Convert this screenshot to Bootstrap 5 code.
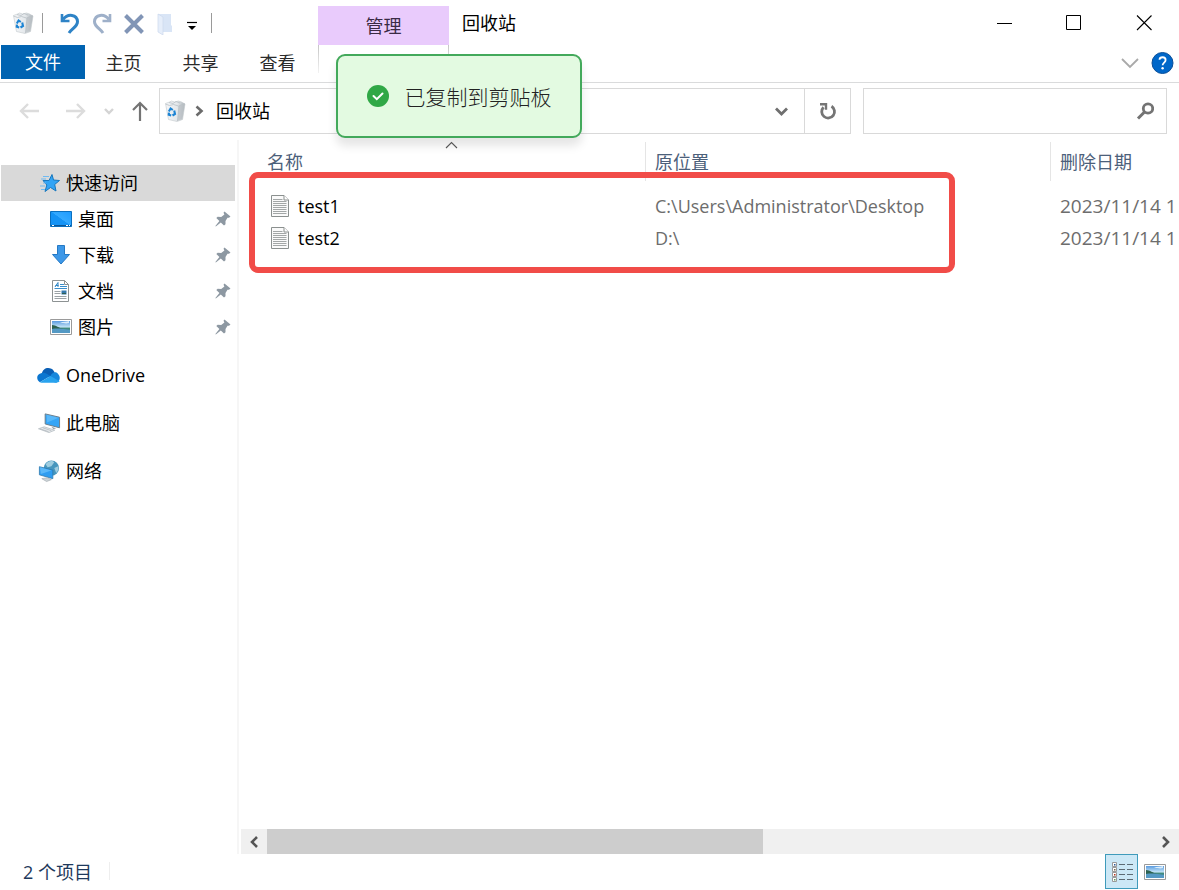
<!DOCTYPE html>
<html lang="zh-CN">
<head>
<meta charset="utf-8">
<meta name="viewport" content="width=device-width, initial-scale=1">
<title>回收站</title>
<link href="https://cdn.jsdelivr.net/npm/bootstrap@5.3.0/dist/css/bootstrap.min.css" rel="stylesheet">
<style>
  body { font-family: "Open Sans", "Noto Sans CJK SC", sans-serif; font-size: 18px; line-height: 24px; color: #000; background: #fff; font-weight: 400; }
  svg { display: block; flex: none; }
  button { background: none; border: 0; padding: 0; color: inherit; }
  a { color: inherit; text-decoration: none; }

  /* title bar and ribbon */
  .title-row { height: 45px; }
  .quick-bar { width: 318px; padding-left: 12px; }
  .v-sep { width: 1px; height: 20px; background: #9a9a9a; }
  .ctx-title { width: 131px; height: 39px; background: #e9cbfc; color: #3a2a44; }
  .win-title { padding-left: 13px; }
  .win-btn { width: 70px; height: 45px; }
  .ribbon { height: 38px; border-bottom: 1px solid #dadbdc; color: #2b2b2b; }
  .tab-btn { width: 77px; height: 36px; }
  .tab-file { width: 84px; height: 34px; margin-left: 1px; background: #0063b1; color: #fff; }
  .ctx-tab { width: 131px; height: 28px; margin-left: 2px; border: 1px solid; border-width: 0 1px; border-image: linear-gradient(#c4c4c4, #f4f4f4) 1; }

  /* address row */
  .nav-row { height: 57px; padding: 5px 12px 6px 0; }
  .nav-arrows { width: 159px; padding-left: 19px; }
  .addr-box, .find-box { height: 46px; border: 1px solid #d9d9d9; }
  .find-box { width: 304px; margin-left: 12px; }
  .find-box input { border: 0; outline: 0; min-width: 0; background: none; }
  .reload-btn { width: 46px; border-left: 1px solid #d9d9d9; }

  /* copy notice */
  .notice { position: absolute; left: 336px; top: 54px; width: 246px; height: 84px; z-index: 5; background: #e3fae1; border: 2px solid #43a95b; border-radius: 9px; box-shadow: 0 8px 10px rgba(0,0,0,.1); color: #222; font-size: 21px; font-weight: 300; font-family: "Noto Sans CJK SC Light", "Noto Sans CJK SC DemiLight", "Noto Sans CJK SC", sans-serif; }

  /* navigation pane */
  .side-pane { width: 239px; flex: none; border-right: 2px solid #f6f6f6; padding: 25px 2px 0 1px; }
  .side-item { height: 36px; gap: 5px; padding-left: 36px; padding-right: 4px; }
  .side-item.sub { padding-left: 48px; }
  .side-item.apart { margin-top: 12px; }
  .side-item.chosen { background: #d9d9d9; }

  /* file list */
  .files { table-layout: fixed; width: 100%; }
  .files th, .files td { padding: 0; white-space: nowrap; overflow: hidden; font-weight: 400; }
  .files th { height: 42px; color: #4c607a; }
  .files td { height: 32px; color: #6d6d6d; }
  .files thead th > div { height: 39px; padding-left: 9px; margin-top: 2px; margin-bottom: 1px; border-left: 1px solid #e5e5e5; }
  .files thead th:first-child > div { border: 0; padding-left: 28px; }
  .files td { padding-left: 10px; }
  .files td.date { font-size: 19px; }
  .files td:first-child { color: #000; padding-left: 31px; }
  .files td.spacer { height: 8px; }
  .c-name { width: 406px; } .c-place { width: 405px; }
  .sort-mark { position: absolute; left: 206px; top: 1px; z-index: 6; }
  .red-frame { position: absolute; left: 10px; top: 32px; width: 706px; height: 101px; border: 6px solid #f14c48; border-radius: 9px; pointer-events: none; }
  .scroll-row { height: 25px; margin-left: 2px; background: #f0f0f0; }
  .scroll-row button { width: 26px; height: 25px; }
  .thumb { width: 56%; background: #cdcdcd; }

  /* status bar */
  .status-row { height: 36px; color: #1e395b; padding-left: 23px; }
  .status-sep { width: 1px; height: 18px; margin: 8px 0 0 17px; background: #eeeeee; }
  .view-btn { width: 33px; height: 35px; }
  .view-btn.on { background: #cce8f6; border: 1px solid #3f9bbb; }
</style>
</head>
<body>
<svg width="0" height="0" class="position-absolute" aria-hidden="true">
  <defs>
    <linearGradient id="binFill" x1="0" x2="1"><stop offset="0" stop-color="#f4f6f8"/><stop offset=".6" stop-color="#e4e8eb"/><stop offset="1" stop-color="#aeb5ba"/></linearGradient>
    <linearGradient id="skyFill" x1="0" y1="0" x2="0" y2="1"><stop offset="0" stop-color="#5a9be0"/><stop offset=".5" stop-color="#c3e3f6"/><stop offset=".6" stop-color="#3f8a7a"/><stop offset="1" stop-color="#4a90b8"/></linearGradient>
    <linearGradient id="scrFill" x1="0" y1="1" x2="1" y2="0"><stop offset=".5" stop-color="#1593f5"/><stop offset=".52" stop-color="#35aaff"/><stop offset="1" stop-color="#1e9bff"/></linearGradient>
    <symbol id="bin" viewBox="0 0 22 22">
      <path d="M1.500 3.500l4-1.500 2-1 3 1 4-1 3 1 3.500 2-2.500 15.500-5.500 2-8.500-2z" fill="url(#binFill)" stroke="#c3c9cd" stroke-width=".6"/>
      <path d="M1.500 4l4 1.500 4-1 5 1.500 6-2.500M5 2.500l4 1 3-2 4 1.500M15 6l-1.500 15" fill="none" stroke="#b9c0c5" stroke-width=".8"/>
      <path d="M15 6l5.500-2.500-2.500 15-4.500 2.500z" fill="#b8bec3" opacity=".65"/>
      <g fill="none" stroke="#1c84d4" stroke-width="2.100"><path d="M4.800 11.500l1.800-3 2.200 1.500"/><path d="M10.200 10.500l.8 3.500-2.500 1.500"/><path d="M7.200 15.500l-2.400-.8.200-2"/></g>
    </symbol>
    <symbol id="pin" viewBox="0 0 16 16"><path d="M9.500 0.500l6 5-1.500 1.300-1.500-.1-2 3.300v3.200L9 14.500 5.800 11.400.8 15.600.4 15.100l4-5.200L1.300 7l1.400-1.300 3.500.2 3.200-2.500-.9-1.700z" fill="#8d98a2"/></symbol>
    <symbol id="photo" viewBox="0 0 22 16">
      <path d="M.5.5h21v15H.5z" fill="#fff" stroke="#9a9a9a"/><path d="M2 2h18v12H2z" fill="url(#skyFill)"/>
      <path d="M2 6c4 0 7 3 11 4H2z" fill="#2d6250"/><path d="M2 10c6-1 12 0 18 1v3H2z" fill="#5499c4"/><path d="M10 4c3-2 6-1 9-2v2c-3 1-5 0-9 0z" fill="#d9edfb"/>
    </symbol>
    <symbol id="txt" viewBox="0 0 18 22">
      <path d="M.5.500h12.500l4.500 4.500v16.500H.5z" fill="#fafafa" stroke="#8b908f"/><path d="M13 .5V5h4.500" fill="#fff" stroke="#8b908f"/>
      <path d="M2 4.500h9.500M2 6.500h13.500M2 8.500h13.500M2 10.500h13.500M2 12.500h13.500M2 14.500h13.500M2 16.500h13.500M2 18.500h13.500" stroke="#a3a7a7"/>
    </symbol>
  </defs>
</svg>

<div class="d-flex flex-column min-vh-100 position-relative overflow-hidden">
  <header>
    <div class="title-row d-flex align-items-end">
      <div class="quick-bar d-flex align-items-center h-100">
        <svg width="22" height="22"><use href="#bin"/></svg>
        <span class="v-sep ms-2"></span>
        <button class="ms-3" aria-label="撤消"><svg width="24" height="24" viewBox="0 0 24 24" fill="none" stroke="#2e83c6"><path d="M4 8.500C9 2 18 3.500 18.500 10.500c.2 5-5.500 7-8.500 11.500" stroke-width="3"/><path d="M3 3v7h7.500" stroke-width="2.600"/></svg></button>
        <button class="ms-2" aria-label="恢复"><svg width="24" height="24" viewBox="0 0 24 24" fill="none" stroke="#9eb0c9"><path d="M18 8.500C13 2 4 3.500 3.500 10.500c-.2 5 5.500 7 8.500 11.500" stroke-width="3"/><path d="M19 3v7h-7.500" stroke-width="2.600"/></svg></button>
        <button class="ms-2" aria-label="删除"><svg width="24" height="24" viewBox="0 0 24 24" fill="none" stroke="#8195b6" stroke-width="4"><path d="M2.500 4.500l17 17M19.500 4.500l-17 17"/></svg></button>
        <button class="ms-2" aria-label="属性"><svg width="24" height="24" viewBox="0 0 24 24"><path d="M3 3h13v11l1 1v6H3z" fill="#d9e5f6"/><path d="M3 3l5 3v18l-5-3z" fill="#e6eefa" stroke="#cbd9ec" stroke-width=".7"/></svg></button>
        <button class="ms-2" aria-label="自定义快速访问工具栏"><svg width="16" height="24" viewBox="0 0 16 24"><path d="M0 11.500h10" stroke="#000" stroke-width="1.200"/><path d="M1 15h8l-4 4z"/></svg></button>
        <span class="v-sep ms-2"></span>
      </div>
      <div class="ctx-title d-flex align-items-center justify-content-center">管理</div>
      <div class="win-title h-100 d-flex align-items-center">回收站</div>
      <div class="ms-auto d-flex">
        <button class="win-btn d-flex align-items-center justify-content-center" aria-label="最小化"><svg width="16" height="16"><path d="M1 8.500h15" stroke="#000"/></svg></button>
        <button class="win-btn d-flex align-items-center justify-content-center" aria-label="最大化"><svg width="16" height="16"><path d="M.5.5h14v14H.5z" fill="none" stroke="#000"/></svg></button>
        <button class="win-btn d-flex align-items-center justify-content-center" aria-label="关闭"><svg width="16" height="16"><path d="M1 .5l14.500 14.500M15.500 .5L1 15" stroke="#000" stroke-width="1.100"/></svg></button>
      </div>
    </div>
    <nav class="ribbon d-flex align-items-start">
      <button class="tab-file">文件</button>
      <button class="tab-btn">主页</button>
      <button class="tab-btn">共享</button>
      <button class="tab-btn">查看</button>
      <div class="ctx-tab"></div>
      <div class="ms-auto d-flex align-items-center h-100 gap-2 pe-1">
        <button class="me-1" aria-label="展开功能区"><svg width="18" height="12" viewBox="0 0 18 12"><path d="M1 1l8 8 8-8" fill="none" stroke="#a9a9a9" stroke-width="1.800"/></svg></button>
        <button aria-label="帮助"><svg width="24" height="23" viewBox="0 0 24 23"><circle cx="11.500" cy="11" r="10.500" fill="#0067c9" stroke="#0a4f99"/><path d="M8.500 7.700C8.700 4.500 14.600 4.300 14.600 7.900c0 2.600-3 2.700-3 5.400" fill="none" stroke="#fff" stroke-width="1.800"/><circle cx="11.600" cy="16.300" r="1.200" fill="#fff"/></svg></button>
      </div>
    </nav>
    <div class="nav-row d-flex">
      <div class="nav-arrows d-flex align-items-center">
        <button aria-label="后退"><svg width="22" height="20" viewBox="0 0 22 20" fill="none" stroke="#dcdcdc" stroke-width="2.400"><path d="M20 10H2M9 3l-7 7 7 7"/></svg></button>
        <button class="ms-4" aria-label="前进"><svg width="22" height="20" viewBox="0 0 22 20" fill="none" stroke="#dcdcdc" stroke-width="2.400"><path d="M1 10h18M12 3l7 7-7 7"/></svg></button>
        <button class="ms-3" aria-label="最近的位置"><svg width="12" height="12" viewBox="0 0 12 12" fill="none" stroke="#d4d4d4" stroke-width="2.400"><path d="M2 4l4 4 4-4"/></svg></button>
        <button class="ms-3" aria-label="上移"><svg width="18" height="22" viewBox="0 0 18 22" fill="none" stroke="#747474" stroke-width="2.200"><path d="M9 21V3M2 10l7-7 7 7"/></svg></button>
      </div>
      <div class="addr-box d-flex align-items-stretch flex-grow-1">
        <div class="d-flex align-items-center flex-grow-1 ps-1">
          <svg width="22" height="22"><use href="#bin"/></svg>
          <svg class="ms-2" width="10" height="12" viewBox="0 0 10 12"><path d="M2.500 1.500L7.500 6l-5 4.500" fill="none" stroke="#6b6b6b" stroke-width="2.600"/></svg>
          <a href="#" class="ms-2 ps-1">回收站</a>
          <button class="ms-auto me-3" aria-label="以前的位置"><svg width="14" height="12" viewBox="0 0 14 12"><path d="M2 3.500l5.500 5.500 5.500-5.500" fill="none" stroke="#6f6f6f" stroke-width="2.800"/></svg></button>
        </div>
        <button class="reload-btn d-flex align-items-center justify-content-center" aria-label="刷新"><svg width="18" height="18" viewBox="0 0 18 18" fill="none" stroke="#757575"><path d="M4.500 5.200A6.400 6.400 0 1 0 12.500 4.200" stroke-width="2.800"/><path d="M1 2.200h6v5.500" stroke-width="2.400"/></svg></button>
      </div>
      <div class="find-box d-flex align-items-center">
        <input type="search" class="flex-grow-1 h-100" aria-label="搜索回收站">
        <button class="me-2 pe-1" aria-label="搜索"><svg width="18" height="18" viewBox="0 0 18 18" fill="none" stroke="#737373"><circle cx="12" cy="6.500" r="4.700" stroke-width="2.800"/><path d="M8.500 10L2 16.500" stroke-width="3"/></svg></button>
      </div>
    </div>
  </header>

  <div class="notice d-flex align-items-center justify-content-center" role="status">
    <svg width="22" height="22" viewBox="0 0 22 22"><circle cx="11" cy="11" r="11" fill="#30a846"/><path d="M6.500 11l3.300 3.200 5.700-5.700" fill="none" stroke="#fff" stroke-width="2" stroke-linecap="round"/></svg>
    <span class="ms-3">已复制到剪贴板</span>
  </div>

  <div class="d-flex flex-grow-1">
    <nav class="side-pane">
      <a href="#" class="side-item chosen d-flex align-items-center"><svg width="24" height="22" viewBox="0 0 24 22"><path d="M15 2.500l1.500 5.500 6 .5-4.800 4 1.300 6.500-5.500-3.500-5.500 4 1.800-6.500L6 8.500h6z" fill="#32a4f5" stroke="#1877bd"/><path d="M6 4.500h6M4 7h5M6 11h3M3 14h5M4 17.500h4" stroke="#6fbaf2" stroke-width="1.200"/></svg>快速访问</a>
      <a href="#" class="side-item sub d-flex align-items-center"><svg width="24" height="18" viewBox="0 0 24 18"><path d="M1.500 1.500h21v15h-21z" fill="url(#scrFill)" stroke="#0a6fbf"/><path d="M2 15.500h20" stroke="#0b5596"/><path d="M3 15.500h2M17 15.500h2M20 15.500h1" stroke="#fff"/></svg><span>桌面</span><svg class="ms-auto" width="16" height="16"><use href="#pin"/></svg></a>
      <a href="#" class="side-item sub d-flex align-items-center"><svg width="24" height="22" viewBox="0 0 24 22"><path d="M8.500 1.500h7v9h5L12 20l-8.500-9.500h5z" fill="#3d98e8" stroke="#2579c4"/></svg><span>下载</span><svg class="ms-auto" width="16" height="16"><use href="#pin"/></svg></a>
      <a href="#" class="side-item sub d-flex align-items-center"><svg width="24" height="22" viewBox="0 0 24 22"><path d="M3.500.5h12l4 4v17h-16z" fill="#fff" stroke="#8d9293"/><path d="M15.500.5v4h4" fill="none" stroke="#8d9293"/><path d="M6 7l3-4.500v4.500M6.500 5.500h3" fill="none" stroke="#2b83c4"/><path d="M11 4.500h4M11 6.500h7M5.500 8.500h12.500" stroke="#3a8ecb"/><path d="M5.500 11.500h6M5.500 13.500h6M5.500 16.500h12M5.500 18.500h12" stroke="#9ba2a6"/><path d="M12.500 10.500h5v4h-5z" fill="#3478ad"/><path d="M13 13h4v1h-4z" fill="#315f51"/></svg><span>文档</span><svg class="ms-auto" width="16" height="16"><use href="#pin"/></svg></a>
      <a href="#" class="side-item sub d-flex align-items-center"><svg width="24" height="16"><use href="#photo"/></svg><span>图片</span><svg class="ms-auto" width="16" height="16"><use href="#pin"/></svg></a>
      <a href="#" class="side-item apart d-flex align-items-center"><svg width="24" height="18" viewBox="0 0 25 18"><path d="M5 8C6 2 11 .5 15 2.500c2 1 3 3 3.500 4L14 11z" fill="#0a5fb5"/><path d="M5 7c3-1 5 .5 9 3L3 16.500C-1 14-1 8 5 7z" fill="#0b76d0"/><path d="M14 10c2-4 6-5 8-2 3 3 2 8-2 9l-8-2z" fill="#1787dc"/><path d="M3 16.500L14 10l9.500 5.500c-1 1-2 1.500-4 1.500H6c-1 0-2 0-3-.5z" fill="#29a3ee"/></svg>OneDrive</a>
      <a href="#" class="side-item apart d-flex align-items-center"><svg width="24" height="22" viewBox="0 0 25 22"><path d="M8.500 1.500L23.500 5v11l-15-4z" fill="#35a5f6" stroke="#6a7b88"/><path d="M10 2.500L22.500 5.500l-12 5z" fill="#69c0fb" opacity=".7"/><path d="M1.500 17l6-2 11 3.500-6 2.500z" fill="#e8ebed" stroke="#b5bcc1" stroke-width=".8"/><path d="M3 17l9 3M6 16l9 3" stroke="#aab2b8" stroke-width=".7"/><path d="M15 15l5 1.500-3 1z" fill="#9ba4aa"/></svg>此电脑</a>
      <a href="#" class="side-item apart d-flex align-items-center"><svg width="24" height="24" viewBox="0 0 25 24"><circle cx="15" cy="9" r="8" fill="#4796bd"/><path d="M9 5c3-4 7-4 9-2l-3 4-4 1zM18 9l4-2c1 2 0 5-2 7z" fill="#9fcde0"/><path d="M2.500 7.500L16.500 11v9l-14-4z" fill="#2f9df1" stroke="#2d78ac" stroke-width=".8"/><path d="M3 8l12 3.500L4 15z" fill="#6dc3fc" opacity=".7"/><path d="M5 20l6-1 4 2-5 2z" fill="#ccd3d7" stroke="#9aa2a7" stroke-width=".6"/></svg>网络</a>
    </nav>

    <main class="d-flex flex-column flex-grow-1 overflow-hidden">
      <div class="position-relative flex-grow-1">
        <table class="files">
          <colgroup><col class="c-name"><col class="c-place"><col></colgroup>
          <thead><tr>
            <th scope="col"><div class="d-flex align-items-center">名称</div></th>
            <th scope="col"><div class="d-flex align-items-center">原位置</div></th>
            <th scope="col"><div class="d-flex align-items-center">删除日期</div></th>
          </tr></thead>
          <tbody>
            <tr><td class="spacer" colspan="3"></td></tr>
            <tr><td><div class="d-flex align-items-center"><svg width="20" height="22"><use href="#txt"/></svg><span class="ms-2">test1</span></div></td><td>C:\Users\Administrator\Desktop</td><td class="date">2023/11/14 1</td></tr>
            <tr><td><div class="d-flex align-items-center"><svg width="20" height="22"><use href="#txt"/></svg><span class="ms-2">test2</span></div></td><td>D:\</td><td class="date">2023/11/14 1</td></tr>
          </tbody>
        </table>
        <svg class="sort-mark" width="13" height="8" viewBox="0 0 13 8"><path d="M1 7l5.500-5.500L12 7" fill="none" stroke="#555" stroke-width="1.100"/></svg>
        <div class="red-frame"></div>
      </div>
      <div class="scroll-row d-flex">
        <button class="d-flex align-items-center justify-content-center" aria-label="向左滚动"><svg width="10" height="12" viewBox="0 0 10 12"><path d="M8 1L3 6l5 5" fill="none" stroke="#555" stroke-width="2.600"/></svg></button>
        <div class="flex-grow-1 d-flex"><div class="thumb"></div></div>
        <button class="d-flex align-items-center justify-content-center" aria-label="向右滚动"><svg width="10" height="12" viewBox="0 0 10 12"><path d="M2 1l5 5-5 5" fill="none" stroke="#555" stroke-width="2.600"/></svg></button>
      </div>
    </main>
  </div>

  <footer class="status-row d-flex align-items-start">
    <div class="d-flex align-items-center h-100"><span>2 个项目</span></div>
    <span class="status-sep"></span>
    <div class="ms-auto d-flex me-2">
      <button class="view-btn on d-flex align-items-center justify-content-center" aria-label="详细信息"><svg width="22" height="22" viewBox="0 0 22 22"><path d="M1.500 1.500h4v4h-4zM1.500 6.500h4v4h-4zM1.500 11.500h4v4h-4zM1.500 16.500h4v4h-4z" fill="#fff" stroke="#999"/><path d="M3 3h1.500v1.500H3z" fill="#2b5d9a"/><path d="M3 8h1.500v1.500H3z" fill="#77664a"/><path d="M3 13h1.500v1.500H3z" fill="#b5351e"/><path d="M3 18h1.500v1.500H3z" fill="#5a9a5a"/><path d="M8 3.500h6M16 3.500h6M8 8.500h6M16 8.500h6M8 13.500h6M16 13.500h6M8 18.500h6M16 18.500h6" stroke="#5d6b74"/></svg></button>
      <button class="view-btn d-flex align-items-center justify-content-center" aria-label="大图标"><svg width="22" height="16"><use href="#photo"/></svg></button>
    </div>
  </footer>
</div>
<script src="https://cdn.jsdelivr.net/npm/bootstrap@5.3.0/dist/js/bootstrap.bundle.min.js"></script>
</body>
</html>
